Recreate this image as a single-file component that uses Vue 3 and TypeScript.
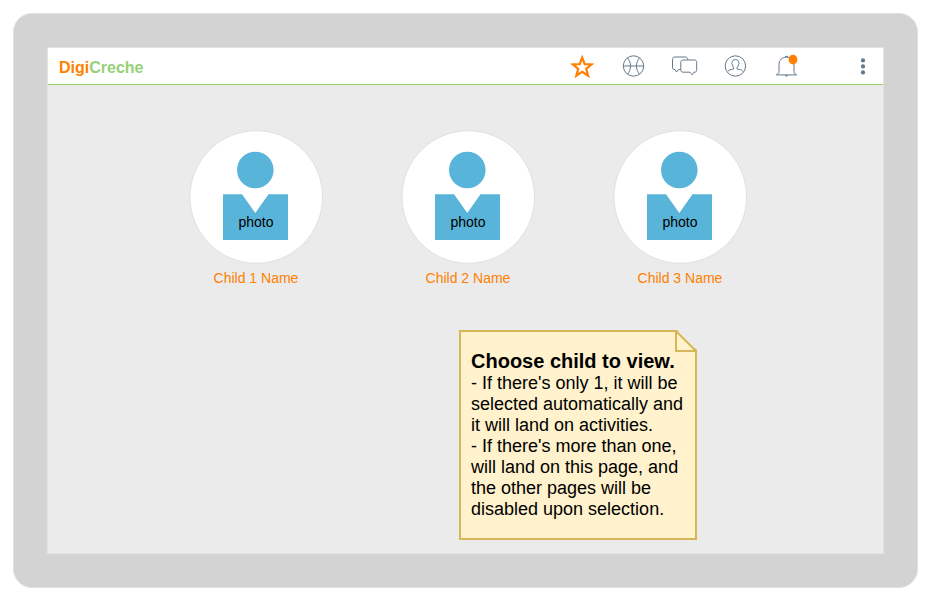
<script setup lang="ts">
import { ref } from 'vue'

interface Child {
  id: number
  name: string
}

const children: Child[] = [
  { id: 1, name: 'Child 1 Name' },
  { id: 2, name: 'Child 2 Name' },
  { id: 3, name: 'Child 3 Name' },
]

const selected = ref<number | null>(null)
</script>

<template>
  <div class="page">
    <div class="tablet">
      <div class="screen">
        <header class="bar">
          <a class="logo" href="#"><span class="logo-digi">Digi</span>Creche</a>
          <nav class="tools" aria-label="Main">
            <button type="button" class="tool star" aria-label="Favourites">
              <svg viewBox="0 0 28 28">
                <path d="M14.2 5.6 L16.7 12.1 L23.5 12.4 L18.2 16.8 L20.1 23.7 L14.2 19.9 L8.3 23.7 L10.2 16.8 L4.9 12.4 L11.7 12.1 Z" />
              </svg>
            </button>
            <button type="button" class="tool" aria-label="Activities">
              <svg viewBox="0 0 28 28">
                <circle cx="14.5" cy="14" r="10.2" />
                <path d="M4.3 14 H24.7 M8.4 5.8 C12.6 10.6 12.6 17.4 8.4 22.2 M20.6 5.8 C16.4 10.6 16.4 17.4 20.6 22.2" />
              </svg>
            </button>
            <button type="button" class="tool" aria-label="Messages">
              <svg viewBox="0 0 28 28">
                <path d="M10.8 17.6 H8.6 L6.5 20 L5 17.6 C3.2 17.6 2.5 16.8 2.5 15.2 V7.6 C2.5 6 3.4 5 5 5 H15.2 C17 5 17.8 6 17.8 7.8" />
                <path d="M13.2 8 H24.2 C26 8 26.7 8.9 26.7 10.4 V17.8 C26.7 19.4 26 20.2 24.4 20.2 H23.9 L22.4 22.9 L20 20.2 H13.2 C11.6 20.2 10.8 19.4 10.8 17.8 V10.4 C10.8 8.9 11.6 8 13.2 8 Z" />
              </svg>
            </button>
            <button type="button" class="tool" aria-label="Profile">
              <svg viewBox="0 0 28 28">
                <circle cx="14.4" cy="14" r="10.2" />
                <path d="M7 19.2 C8 17.9 9.4 17.6 12.6 17 V15.2 C11.8 14.4 11.5 13.8 11.3 12.8 L10.7 11.6 L11.1 10.8 C11.1 8.6 12.2 7.6 14.4 7.6 C16.6 7.6 17.7 8.6 17.7 10.8 L18.1 11.6 L17.5 12.8 C17.3 13.8 17 14.4 16.2 15.2 V17 C19.4 17.6 20.8 17.9 21.8 19.2" />
              </svg>
            </button>
            <button type="button" class="tool" aria-label="Notifications, new">
              <svg viewBox="0 0 28 28">
                <path d="M4.2 22.9 H24.8 M4.4 22.6 C6 22 7 21.4 7 19.6 V12.4 C7 8.4 9.8 5.2 14.5 5.2 C19.2 5.2 22 8.4 22 12.4 V19.6 C22 21.4 23 22 24.6 22.6 M13 4.4 H16 M13 23.8 H16" />
                <ellipse class="alert" cx="21" cy="7.6" rx="4.4" ry="4.9" />
              </svg>
            </button>
            <button type="button" class="tool more" aria-label="More">
              <svg viewBox="0 0 28 28">
                <circle cx="14" cy="8.4" r="2.1" />
                <circle cx="14" cy="14.4" r="2.1" />
                <circle cx="14" cy="20.4" r="2.1" />
              </svg>
            </button>
          </nav>
        </header>

        <main class="content">
          <div class="children">
            <button
              v-for="child in children"
              :key="child.id"
              type="button"
              class="child"
              :aria-pressed="selected === child.id"
              @click="selected = child.id"
            >
              <svg class="photo" viewBox="0 0 134 134">
                <circle class="disc" cx="67.3" cy="67" r="66.3" />
                <circle class="person" cx="66.3" cy="40" r="18.3" />
                <path class="person" d="M34 64.2 H53 L66.3 83 L79.5 64.2 H99 V110 H34 Z" />
                <text x="67" y="97">photo</text>
              </svg>
              <span class="name">{{ child.name }}</span>
            </button>
          </div>

          <aside class="note">
            <svg class="fold" viewBox="0 0 23 23">
              <path d="M2 1 V21 H22 Z" />
            </svg>
            <h2>Choose child to view.</h2>
            <p>- If there's only 1, it will be selected automatically and it will land on activities.</p>
            <p>- If there's more than one, will land on this page, and the other pages will be disabled upon selection.</p>
          </aside>
        </main>
      </div>
    </div>
  </div>
</template>

<style>
body {
  margin: 0;
  background: #ffffff;
}
</style>

<style scoped>
* {
  box-sizing: border-box;
}

.page {
  display: flex;
  min-height: 100vh;
  padding: 13px 14px 13px 13px;
  font-family: "Liberation Sans", Arial, sans-serif;
  color: #000000;
}

.tablet {
  display: flex;
  flex: 1;
  padding: 33px;
  border: 1px solid #e0e0e0;
  border-radius: 19px;
  background: #d3d3d3;
}

.screen {
  display: flex;
  flex: 1;
  flex-direction: column;
  border: 1px solid #e2e2e2;
  background: #ebebeb;
}

.bar {
  display: flex;
  align-items: center;
  justify-content: space-between;
  height: 37px;
  padding: 0 6px 0 11px;
  border-bottom: 1px solid #97d077;
  background: #ffffff;
}

.logo {
  padding-top: 4px;
  font-size: 16px;
  font-weight: bold;
  line-height: 18px;
  color: #97d077;
  text-decoration: none;
}

.logo-digi {
  color: #ff8000;
}

.tools {
  display: flex;
  gap: 23px;
}

.tool {
  width: 28px;
  height: 28px;
  padding: 0;
  border: 0;
  background: none;
  cursor: pointer;
}

.tool svg {
  display: block;
  width: 28px;
  height: 28px;
  fill: none;
  stroke: #64788c;
  stroke-width: 1;
}

.star svg {
  stroke: #ff8000;
  stroke-width: 2.2;
  stroke-miterlimit: 10;
}

.tool .alert {
  fill: #ff8000;
  stroke: none;
}

.more {
  margin-left: 26px;
}

.more svg {
  fill: #64788c;
  stroke: none;
}

.content {
  display: flex;
  flex: 1;
  flex-direction: column;
  align-items: center;
  padding: 45px 0 13px;
}

.children {
  display: flex;
  gap: 78px;
  margin-left: 5px;
}

.child {
  display: flex;
  flex-direction: column;
  align-items: center;
  gap: 6px;
  width: 134px;
  padding: 0;
  border: 0;
  background: none;
  font: inherit;
  cursor: pointer;
}

.photo {
  display: block;
  width: 134px;
  height: 134px;
}

.disc {
  fill: #ffffff;
  stroke: #e0e0e0;
}

.person {
  fill: #59b4d9;
}

.photo text {
  font-size: 14px;
  text-anchor: middle;
}

.name {
  font-size: 14px;
  line-height: 16px;
  color: #ff8000;
}

.note {
  position: relative;
  width: 238px;
  margin: 44px 0 0 225px;
  padding: 18px 10px;
  border: 2px solid #d6b656;
  background: #fff2cc;
  clip-path: polygon(0 0, calc(100% - 20px) 0, 100% 20px, 100% 100%, 0 100%);
}

.fold {
  position: absolute;
  top: -2px;
  right: -2px;
  width: 23px;
  height: 23px;
  fill: #fff2cc;
  stroke: #d6b656;
  stroke-width: 2;
}

.note h2 {
  margin: 0;
  font-size: 20px;
  line-height: 23px;
}

.note p {
  margin: 0;
  font-size: 18px;
  line-height: 21px;
}
</style>
